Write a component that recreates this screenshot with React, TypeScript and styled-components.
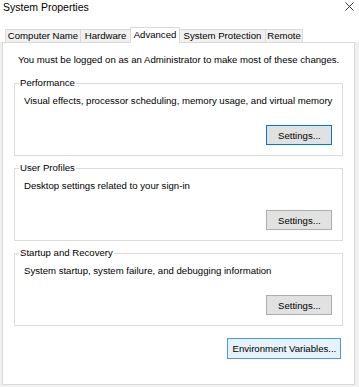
import React from "react";
import styled, { createGlobalStyle } from "styled-components";

const Global = createGlobalStyle`
  html, body { margin: 0; padding: 0; background: #ffffff; }
  body { font-family: "Liberation Sans", Arial, sans-serif; }
  * { box-sizing: border-box; }
`;

const Window = styled.div`
  width: 359px;
  height: 387px;
  background: #ffffff;
  display: flex;
  flex-direction: column;
  overflow: hidden;
  color: #000;
`;

const TitleBar = styled.div`
  height: 27px;
  display: flex;
  align-items: flex-start;
  justify-content: space-between;
  padding: 0 5px 0 3px;
`;

const Title = styled.div`
  font-size: 10.5px;
  line-height: 14px;
`;

const Close = styled.svg`
  margin-top: 2px;
`;

const TabRow = styled.div`
  display: flex;
  align-items: flex-end;
  height: 15px;
  padding-left: 5px;
  position: relative;
  z-index: 1;
`;

const Tab = styled.div<{ $active?: boolean; $w: number }>`
  width: ${(p) => p.$w}px;
  height: ${(p) => (p.$active ? 16 : 13)}px;
  margin-bottom: ${(p) => (p.$active ? -1 : 0)}px;
  padding-top: ${(p) => (p.$active ? 1 : 0)}px;
  border: 1px solid #d9d9d9;
  border-bottom: none;
  background: ${(p) => (p.$active ? "#ffffff" : "#f0f0f0")};
  font-size: 9.6px;
  line-height: 12px;
  text-align: center;
  white-space: nowrap;
  position: relative;
  z-index: ${(p) => (p.$active ? 2 : 1)};
  & + & {
    margin-left: -1px;
  }
`;

const Frame = styled.div`
  flex: 1;
  background: #f0f0f0;
  padding: 0 4px 2px 2px;
  display: flex;
`;

const Panel = styled.div`
  flex: 1;
  background: #ffffff;
  border: 1px solid #d9d9d9;
  padding: 11px 11px 0 11px;
  display: flex;
  flex-direction: column;
`;

const Notice = styled.div`
  font-size: 9.6px;
  line-height: 12px;
  margin: 0 0 11px 4px;
  white-space: nowrap;
`;

const Group = styled.fieldset`
  margin: 0 0 6px 0;
  padding: 0 10px 10px 9px;
  border: 1px solid #dcdcdc;
  min-width: 0;
`;

const Legend = styled.legend`
  font-size: 9.6px;
  line-height: 12px;
  padding: 0 1px;
  margin-left: -5px;
`;

const Desc = styled.div`
  font-size: 9.6px;
  line-height: 12px;
  margin-top: 6px;
  white-space: nowrap;
`;

const ButtonRow = styled.div`
  display: flex;
  justify-content: flex-end;
  margin-top: 18px;
`;

const Button = styled.button<{ $variant?: "default" | "hover" | "normal"; $w: number; $h: number }>`
  width: ${(p) => p.$w}px;
  height: ${(p) => p.$h}px;
  padding: 0;
  font-family: "Liberation Sans", Arial, sans-serif;
  font-size: 9.6px;
  color: #000;
  background: ${(p) => (p.$variant === "hover" ? "#e5f1fb" : "#e1e1e1")};
  border: 1px solid
    ${(p) =>
      p.$variant === "default" ? "#0078d7" : p.$variant === "hover" ? "#4a9ae0" : "#adadad"};
  border-radius: 0;
  outline: none;
`;

const EnvRow = styled.div`
  display: flex;
  justify-content: flex-end;
  margin: 6px 2px 0 0;
`;

type GroupProps = { title: string; desc: string; variant?: "default" | "normal" };

function SettingsGroup({ title, desc, variant = "normal" }: GroupProps) {
  return (
    <Group>
      <Legend>{title}</Legend>
      <Desc>{desc}</Desc>
      <ButtonRow>
        <Button $variant={variant} $w={66} $h={20}>
          Settings...
        </Button>
      </ButtonRow>
    </Group>
  );
}

const tabs = [
  { label: "Computer Name", w: 76 },
  { label: "Hardware", w: 51 },
  { label: "Advanced", w: 50 },
  { label: "System Protection", w: 87 },
  { label: "Remote", w: 38 },
];

export default function App() {
  return (
    <>
      <Global />
      <Window>
        <TitleBar>
          <Title>System Properties</Title>
          <Close width="9" height="9" viewBox="0 0 9 9">
            <path d="M0.5 0.5 L8.5 8.5 M8.5 0.5 L0.5 8.5" stroke="#222" strokeWidth="0.9" fill="none" />
          </Close>
        </TitleBar>
        <TabRow>
          {tabs.map((t) => (
            <Tab key={t.label} $w={t.w} $active={t.label === "Advanced"}>
              {t.label}
            </Tab>
          ))}
        </TabRow>
        <Frame>
          <Panel>
            <Notice>You must be logged on as an Administrator to make most of these changes.</Notice>
            <SettingsGroup
              title="Performance"
              desc="Visual effects, processor scheduling, memory usage, and virtual memory"
              variant="default"
            />
            <SettingsGroup title="User Profiles" desc="Desktop settings related to your sign-in" />
            <SettingsGroup
              title="Startup and Recovery"
              desc="System startup, system failure, and debugging information"
            />
            <EnvRow>
              <Button $variant="hover" $w={114} $h={21}>
                Environment Variables...
              </Button>
            </EnvRow>
          </Panel>
        </Frame>
      </Window>
    </>
  );
}
